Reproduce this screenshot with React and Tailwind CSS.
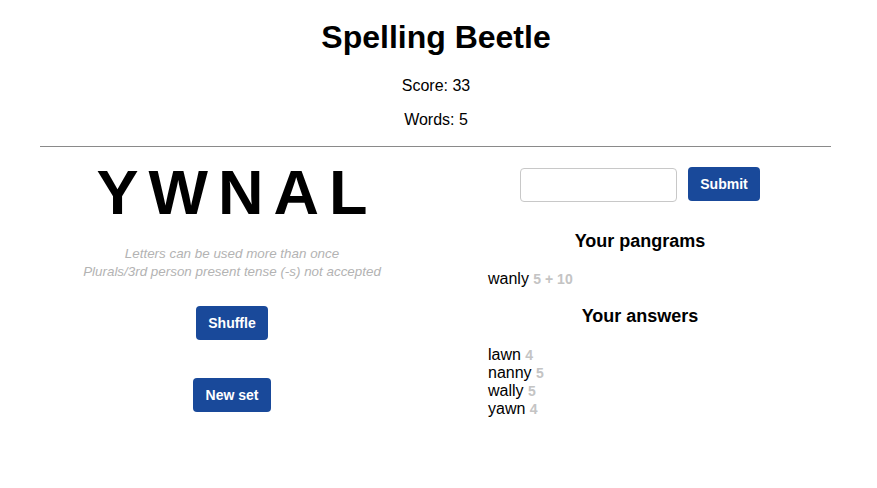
const answers = [
  { word: 'lawn', points: '4' },
  { word: 'nanny', points: '5' },
  { word: 'wally', points: '5' },
  { word: 'yawn', points: '4' },
];

function BlueButton({ children, className = '' }) {
  return (
    <button className={`h-[34px] rounded-[4px] bg-[#19499a] text-white text-[14px] font-bold ${className}`}>
      {children}
    </button>
  );
}

export default function App() {
  return (
    <div className="w-[872px] h-[488px] bg-white text-black font-['Liberation_Sans',Arial,sans-serif]">
      <h1 className="pt-[19px] text-center text-[32px] leading-[37px] font-bold">Spelling Beetle</h1>
      <p className="mt-[21px] text-center text-[16px] leading-[18px]">Score: 33</p>
      <p className="mt-[16px] text-center text-[16px] leading-[18px]">Words: 5</p>
      <hr className="mt-[17px] ml-[40px] mr-[41px] border-0 border-t border-[#8a8a8a]" />

      <div className="flex">
        <div className="w-[464px] flex flex-col items-center">
          <div className="mt-[13px] pl-[10px] text-[63px] leading-[64px] font-bold tracking-[10px]">YWNAL</div>
          <div className="mt-[21px] text-center text-[13.4px] leading-[18px] italic text-[#b3b3b3]">
            <p>Letters can be used more than once</p>
            <p>Plurals/3rd person present tense (-s) not accepted</p>
          </div>
          <BlueButton className="mt-[25px] w-[72px]">Shuffle</BlueButton>
          <BlueButton className="mt-[38px] w-[78px]">New set</BlueButton>
        </div>

        <div className="w-[352px] flex flex-col">
          <div className="mt-[19px] flex items-center justify-center gap-[11px]">
            <input className="mt-[2px] w-[157px] h-[34px] rounded-[4px] border border-[#c8c8c8] px-2 text-[16px] outline-none" />
            <BlueButton className="w-[72px]">Submit</BlueButton>
          </div>
          <h2 className="mt-[29px] text-center text-[18px] leading-[21px] font-bold">Your pangrams</h2>
          <div className="mt-[18px] pl-[24px] text-[16px] leading-[18px]">
            wanly <span className="text-[14px] font-bold text-[#c4c4c4]">5 + 10</span>
          </div>
          <h2 className="mt-[18px] text-center text-[18px] leading-[21px] font-bold">Your answers</h2>
          <ul className="mt-[19px] pl-[24px] text-[16px] leading-[18px]">
            {answers.map(a => (
              <li key={a.word}>
                {a.word} <span className="text-[14px] font-bold text-[#c4c4c4]">{a.points}</span>
              </li>
            ))}
          </ul>
        </div>
      </div>
    </div>
  );
}
